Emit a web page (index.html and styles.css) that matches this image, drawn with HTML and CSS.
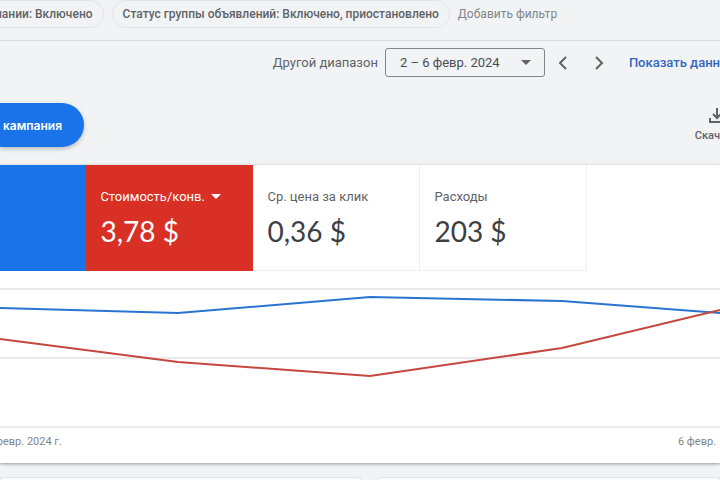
FILE: index.html
```
<!DOCTYPE html>
<html lang="ru">
<head>
    <meta charset="UTF-8">
    <meta name="viewport" content="width=device-width, initial-scale=1.0">
    <title>Кампании</title>
    <link rel="stylesheet" href="styles.css">
</head>
<body>
    <div class="filters">
        <button class="chip chip-first">пании: Включено</button>
        <button class="chip">Статус группы объявлений: Включено, приостановлено</button>
        <button class="add-filter">Добавить фильтр</button>
    </div>

    <div class="date-bar">
        <label class="range-label" for="range">Другой диапазон</label>
        <div class="range">
            <select id="range">
                <option>2 – 6 февр. 2024</option>
            </select>
            <svg class="caret" width="10" height="5" viewBox="0 0 10 5"><path d="M0 0h10L5 5z"/></svg>
        </div>
        <button class="arrow" aria-label="Назад">
            <svg width="12" height="16" viewBox="0 0 12 16"><path d="M9 2L3 8l6 6"/></svg>
        </button>
        <button class="arrow" aria-label="Вперёд">
            <svg width="12" height="16" viewBox="0 0 12 16"><path d="M3 2l6 6-6 6"/></svg>
        </button>
        <a class="show-data" href="#">Показать данн</a>
    </div>

    <div class="actions">
        <button class="new-campaign">кампания</button>
        <button class="download">
            <svg width="16" height="16" viewBox="0 0 16 16"><path d="M8 0v10M4 6l4 4 4-4M1 10v4h14v-4"/></svg>
            <span>Скач</span>
        </button>
    </div>

    <div class="panel">
        <div class="metrics">
            <div class="metric blue"></div>
            <div class="metric red">
                <button class="metric-name">Стоимость/конв.
                    <svg class="caret" width="10" height="5" viewBox="0 0 10 5"><path d="M0 0h10L5 5z"/></svg>
                </button>
                <div class="metric-value">3,78 $</div>
            </div>
            <div class="metric">
                <button class="metric-name">Ср. цена за клик</button>
                <div class="metric-value">0,36 $</div>
            </div>
            <div class="metric">
                <button class="metric-name">Расходы</button>
                <div class="metric-value">203 $</div>
            </div>
        </div>

        <svg class="chart" viewBox="0 0 720 140" preserveAspectRatio="none">
            <path class="grid-line" d="M0 1H720M0 70H720M0 139H720"/>
            <polyline class="line-blue" points="0,20 178,25 370,9 562,13 720,25"/>
            <polyline class="line-red" points="0,51 178,74 370,88 562,60 720,22"/>
        </svg>
        <div class="axis">
            <span>февр. 2024 г.</span>
            <span>6 февр.</span>
        </div>
    </div>

    <div class="cards">
        <div class="card"></div>
        <div class="card"></div>
    </div>
</body>
</html>
```
FILE: styles.css
```
* {
    margin: 0;
    padding: 0;
    box-sizing: border-box;
}

body {
    display: flex;
    flex-direction: column;
    height: 100vh;
    overflow: hidden;
    font-family: Roboto, Arial, sans-serif;
    font-size: 13px;
    color: #5f6368;
    background-color: #f1f3f4;
}

button {
    border: none;
    background: none;
    font: inherit;
    color: inherit;
    white-space: nowrap;
    cursor: pointer;
}

/* Filter bar */
.filters {
    display: flex;
    align-items: flex-start;
    gap: 8px;
    height: 41px;
    border-bottom: 1px solid #dadce0;
}

.chip {
    height: 28px;
    padding: 0 10px;
    border: 1px solid #e3e5e8;
    border-radius: 14px;
    font-size: 12px;
    font-weight: 500;
}

.chip-first {
    margin-left: -5px;
    padding-left: 0;
    border-left: none;
    border-radius: 0 14px 14px 0;
}

.add-filter {
    height: 28px;
    font-size: 12px;
    color: #80868b;
}

/* Date range */
.date-bar {
    display: flex;
    align-items: center;
    justify-content: flex-end;
    height: 43px;
}

.range-label {
    margin-right: 7px;
}

.range {
    display: flex;
    align-items: center;
}

.range select {
    width: 160px;
    height: 29px;
    padding: 0 14px;
    border: 1px solid #80868b;
    border-radius: 3px;
    appearance: none;
    background: none;
    font: inherit;
    color: #4a4d51;
}

.range .caret {
    margin-left: -24px;
    margin-right: 14px;
    pointer-events: none;
}

.caret {
    fill: currentColor;
}

.arrow {
    display: flex;
    justify-content: center;
    width: 36px;
}

.arrow svg {
    fill: none;
    stroke: #5f6368;
    stroke-width: 2;
}

.show-data {
    margin-left: 12px;
    font-weight: 500;
    color: #3367c0;
    text-decoration: none;
    white-space: nowrap;
}

/* Buttons over the panel */
.actions {
    display: flex;
    align-items: flex-start;
    justify-content: space-between;
    height: 81px;
    padding-top: 19px;
}

.new-campaign {
    height: 44px;
    padding: 0 22px 0 3px;
    border-radius: 0 22px 22px 0;
    background-color: #1a73e8;
    box-shadow: 0 2px 4px rgba(60, 64, 67, 0.3);
    font-family: Inter, sans-serif;
    font-size: 12px;
    font-weight: 600;
    color: #fff;
}

.download {
    display: flex;
    flex-direction: column;
    align-items: flex-end;
    gap: 5px;
    padding-top: 5px;
    font-size: 11px;
    font-weight: 500;
}

.download svg {
    margin-right: -5px;
    fill: none;
    stroke: #5f6368;
    stroke-width: 2;
}

/* Panel with metrics and chart */
.panel {
    background-color: #fff;
    box-shadow: 0 1px 3px rgba(60, 64, 67, 0.5);
}

.metrics {
    display: grid;
    grid-template-columns: 12% repeat(3, 23.2%);
}

.metric {
    height: 106px;
    padding: 22px 14px;
    border-right: 1px solid #efefef;
    border-bottom: 1px solid #efefef;
}

.metric-name {
    display: flex;
    align-items: center;
    gap: 6px;
    height: 18px;
}

.metric-value {
    margin-top: 8px;
    font-family: Lato, sans-serif;
    font-size: 28px;
    line-height: 36px;
    color: #3c4043;
}

.blue {
    border: none;
    background-color: #1a73e8;
}

.red {
    border: none;
    background-color: #d93025;
    color: #fff;
}

.red .metric-value {
    color: #fff;
}

.chart {
    display: block;
    width: 100%;
    height: 140px;
    margin-top: 17px;
    fill: none;
}

.grid-line {
    stroke: #e4e4e4;
    stroke-width: 1.5;
}

.line-blue {
    stroke: #2a74cf;
    stroke-width: 2;
}

.line-red {
    stroke: #c5483f;
    stroke-width: 2;
}

.axis {
    display: flex;
    justify-content: space-between;
    height: 35px;
    padding: 7px 4px 0 0;
    margin-left: -5px;
    font-size: 11px;
    color: #80868b;
}

/* Cards under the panel */
.cards {
    display: grid;
    flex: 1;
    grid-template-columns: 362fr 343fr;
    gap: 15px;
    margin-top: 14px;
}

.card {
    border: 1px solid #e3e5e8;
    border-bottom: none;
    border-radius: 0 8px 0 0;
    background-color: #f8f9fa;
}

.card + .card {
    border-radius: 8px 0 0 0;
}
```
